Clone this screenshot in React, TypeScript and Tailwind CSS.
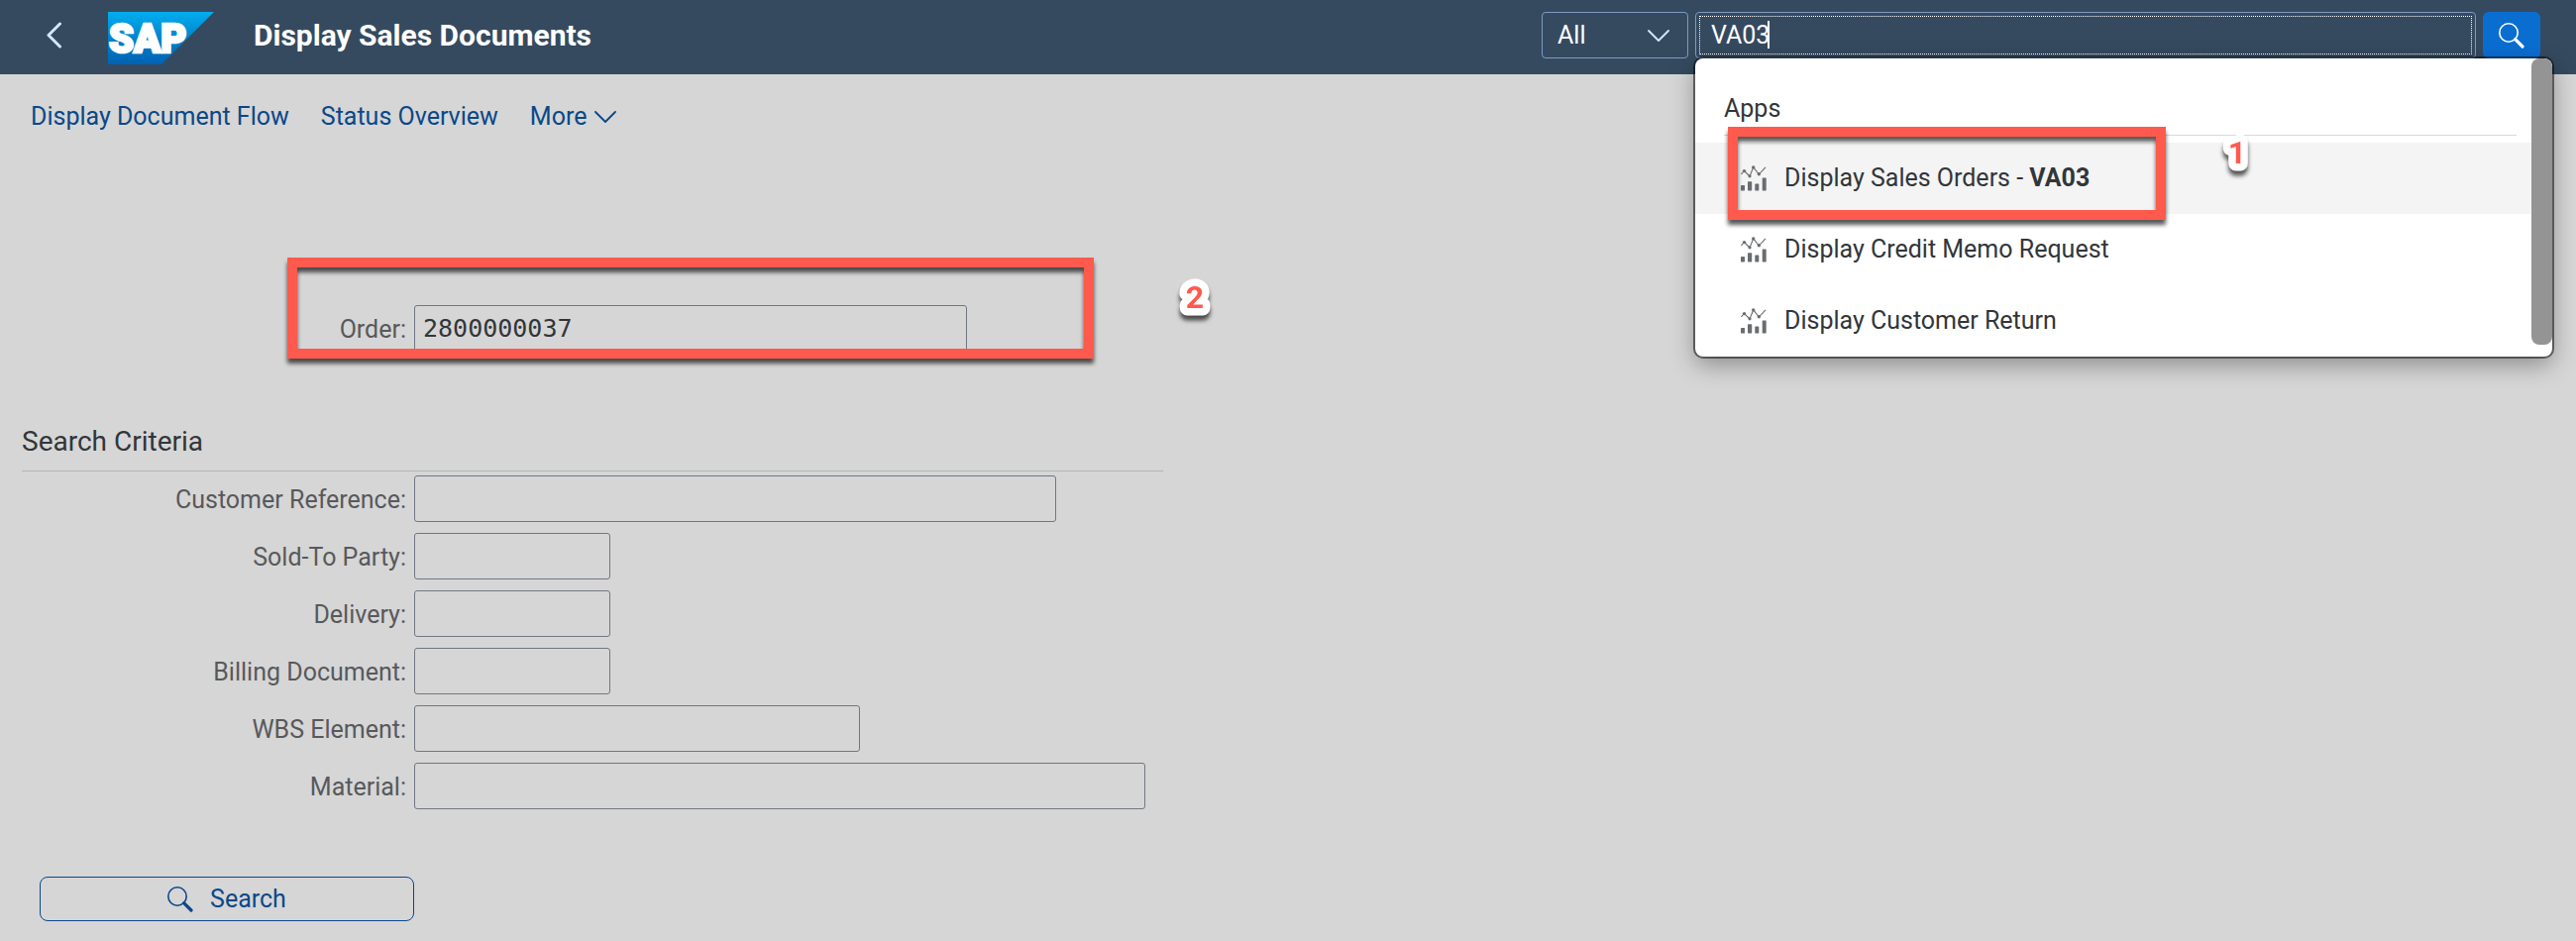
import { useState } from "react";

const apps = [
   { name: "Display Sales Orders - ", match: "VA03" },
   { name: "Display Credit Memo Request", match: "" },
   { name: "Display Customer Return", match: "" },
];

const criteria = [
   { id: "customer-reference", label: "Customer Reference:", width: "w-[648px]" },
   { id: "sold-to", label: "Sold-To Party:", width: "w-[198px]" },
   { id: "delivery", label: "Delivery:", width: "w-[198px]" },
   { id: "billing", label: "Billing Document:", width: "w-[198px]" },
   { id: "wbs", label: "WBS Element:", width: "w-[450px]" },
   { id: "material", label: "Material:", width: "w-[738px]" },
];

function SapLogo() {
   return (
      <svg width="107" height="53" viewBox="0 0 107 53" role="img" aria-label="SAP">
         <defs>
            <linearGradient id="sap" x1="0" y1="0" x2="0" y2="1">
               <stop offset="0" stopColor="#00aeef" />
               <stop offset="0.5" stopColor="#0083cb" />
               <stop offset="1" stopColor="#0062b4" />
            </linearGradient>
         </defs>
         <path d="M0 0h107L54 53H0z" fill="url(#sap)" />
         <text x="1" y="41" fontFamily="Roboto, sans-serif" fontWeight="900" fontSize="40" fill="#fff" stroke="#fff" strokeWidth="2.6">
            SAP
         </text>
      </svg>
   );
}

function SearchIcon() {
   return (
      <svg width="26" height="26" viewBox="0 0 26 26" fill="none" stroke="currentColor">
         <circle cx="10" cy="10" r="9.2" strokeWidth="1.6" />
         <path d="M16.6 16.6L24 24" strokeWidth="3.2" strokeLinecap="round" />
      </svg>
   );
}

function ChevronDown() {
   return (
      <svg width="22" height="12" viewBox="0 0 22 12" fill="none" stroke="currentColor" strokeWidth="1.8" strokeLinecap="round" strokeLinejoin="round">
         <path d="M1 1l10 10L21 1" />
      </svg>
   );
}

function ChartIcon() {
   return (
      <svg width="26" height="26" viewBox="0 0 26 26" fill="#6a6d70" className="shrink-0">
         <path d="M.4 9L3.5 5.5 9 11l3.7-9.2L18.3 9 25 1.8" fill="none" stroke="#6a6d70" strokeWidth="1.1" />
         <circle cx="3.5" cy="5.6" r="1.7" />
         <circle cx="9" cy="10.8" r="1.6" />
         <circle cx="12.7" cy="1.9" r="1.7" />
         <circle cx="18.3" cy="8.8" r="1.7" />
         <rect x="0" y="20" width="4" height="5.5" rx=".4" />
         <rect x="7" y="16.3" width="4.2" height="9.2" rx=".4" />
         <rect x="14.3" y="18.6" width="4" height="6.9" rx=".4" />
         <rect x="21.7" y="12.6" width="4" height="12.9" rx=".4" />
      </svg>
   );
}

// step number with a thick white outline
function StepNumber({ value }: { value: string }) {
   return (
      <svg width="48" height="56" viewBox="0 0 48 56" className="overflow-visible drop-shadow-[0_5px_2px_rgba(0,0,0,0.65)]">
         <text
            x="24"
            y="36"
            textAnchor="middle"
            fontFamily="Roboto, sans-serif"
            fontWeight="700"
            fontSize="32"
            fill="#ff5a4d"
            stroke="#fff"
            strokeWidth="15"
            strokeLinejoin="round"
            paintOrder="stroke"
         >
            {value}
         </text>
      </svg>
   );
}

function Suggestions() {
   return (
      <div className="absolute left-0 -right-3 top-full z-10 h-[301px] overflow-hidden rounded-lg bg-white text-[#32363a] shadow-[0_0_0_2px_rgba(0,0,0,0.5),0_8px_24px_rgba(0,0,0,0.35)]">
         <div className="flex">
            <div className="flex-1">
               <h3 className="ml-[29px] mr-[15px] border-b border-[#d9d9d9] pb-2 pt-[33px] leading-9">Apps</h3>
               <ul className="mt-[7px]">
                  {apps.map((app, index) => (
                     <li key={app.name} className={index === 0 ? "bg-[#f4f4f4]" : ""}>
                        <a href="#" className="flex h-[72px] items-center gap-[18px] pl-[46px]">
                           <ChartIcon />
                           <span>
                              {app.name}
                              <b>{app.match}</b>
                           </span>
                        </a>
                     </li>
                  ))}
               </ul>
            </div>
            {/* scrollbar */}
            <div className="h-[289px] w-[21px] rounded-lg bg-[#949494]" />
         </div>
      </div>
   );
}

function App() {
   const [term, setTerm] = useState("VA03");
   const [order, setOrder] = useState("2800000037");

   return (
      <div className="min-h-screen bg-[#d6d6d6] font-[Roboto,sans-serif] text-[25px] text-[#32363a]">
         <header className="flex items-start bg-[#354a5f] pb-2.5 pl-[46px] pr-9 pt-3 text-white">
            <button aria-label="Back" className="flex h-[47px] w-[63px] items-center text-[#d1e8ff]">
               <svg width="17" height="27" viewBox="0 0 17 27" fill="none" stroke="currentColor" strokeWidth="3" strokeLinecap="round" strokeLinejoin="round">
                  <path d="M14.5 2L3 13.5 14.5 25" />
               </svg>
            </button>
            <SapLogo />
            <h1 className="ml-10 flex-1 text-[30px] font-bold leading-[47px]">Display Sales Documents</h1>

            <div className="flex gap-[7px]">
               <div className="relative">
                  <select aria-label="Search in" className="h-[47px] w-[148px] appearance-none rounded-sm border border-[#7b9cc4] pl-[15px] outline-none">
                     <option>All</option>
                  </select>
                  <span className="pointer-events-none absolute right-[19px] top-[18px] text-[#d1e8ff]">
                     <ChevronDown />
                  </span>
               </div>
               <div className="relative flex gap-[7px]">
                  <div className="relative h-[47px] w-[788px] rounded-sm border border-[#7b9cc4] p-[3px]">
                     <input
                        aria-label="Search"
                        value={term}
                        onChange={(e) => setTerm(e.target.value)}
                        className="h-full w-full border border-dotted border-white pl-[11px] outline-none"
                     />
                     <span className="absolute left-[72px] top-2 h-7 w-0.5 bg-white" />
                  </div>
                  <button aria-label="Run search" className="flex h-[47px] w-[58px] items-center justify-center rounded-md bg-[#0a6ed1]">
                     <SearchIcon />
                  </button>
                  <Suggestions />
                  <div className="pointer-events-none absolute left-[33px] top-[116px] z-20 h-[94px] w-[442px] border-10 border-[#ff5a4d] drop-shadow-[0_5px_2px_rgba(0,0,0,0.65)]" />
                  <div className="pointer-events-none absolute left-[523px] top-[117px] z-20">
                     <StepNumber value="1" />
                  </div>
               </div>
            </div>
         </header>

         <nav className="flex h-[86px] items-center gap-8 px-[31px] text-[#0a4889]">
            <a href="#">Display Document Flow</a>
            <a href="#">Status Overview</a>
            <button className="flex items-center gap-2">
               More
               <ChevronDown />
            </button>
         </nav>

         <main className="px-[22px] pb-5 pt-[147px]">
            <div className="relative flex items-center gap-2">
               <label htmlFor="order" className="w-[388px] pt-0.5 text-right text-[#58595c]">
                  Order:
               </label>
               <input
                  id="order"
                  value={order}
                  onChange={(e) => setOrder(e.target.value)}
                  className="h-[47px] w-[558px] rounded-[3px] border border-[#717783] pl-2 font-['DejaVu_Sans_Mono',monospace] outline-none"
               />
               <div className="pointer-events-none absolute -top-12 left-[268px] h-[102px] w-[814px] border-10 border-[#ff5a4d] drop-shadow-[0_5px_2px_rgba(0,0,0,0.65)]" />
               <div className="pointer-events-none absolute -top-[33px] left-[1160px]">
                  <StepNumber value="2" />
               </div>
            </div>

            <section className="mt-[73px] max-w-[1152px]">
               <h2 className="border-b border-[#b3b4b6] pb-[11px] text-[28px] leading-9">Search Criteria</h2>
               <div className="mt-1 flex flex-col gap-[11px]">
                  {criteria.map((field) => (
                     <div key={field.id} className="flex items-center gap-2">
                        <label htmlFor={field.id} className="w-[388px] shrink-0 pt-0.5 text-right text-[#58595c]">
                           {field.label}
                        </label>
                        <input id={field.id} className={`h-[47px] rounded-[3px] border border-[#717783] px-2 outline-none ${field.width}`} />
                     </div>
                  ))}
               </div>
            </section>

            <button className="ml-[18px] mt-[68px] flex h-[45px] w-[378px] items-center justify-center gap-[17px] rounded-lg border border-[#0a4889] text-[#0a4889]">
               <SearchIcon />
               Search
            </button>
         </main>
      </div>
   );
}

export default App;
